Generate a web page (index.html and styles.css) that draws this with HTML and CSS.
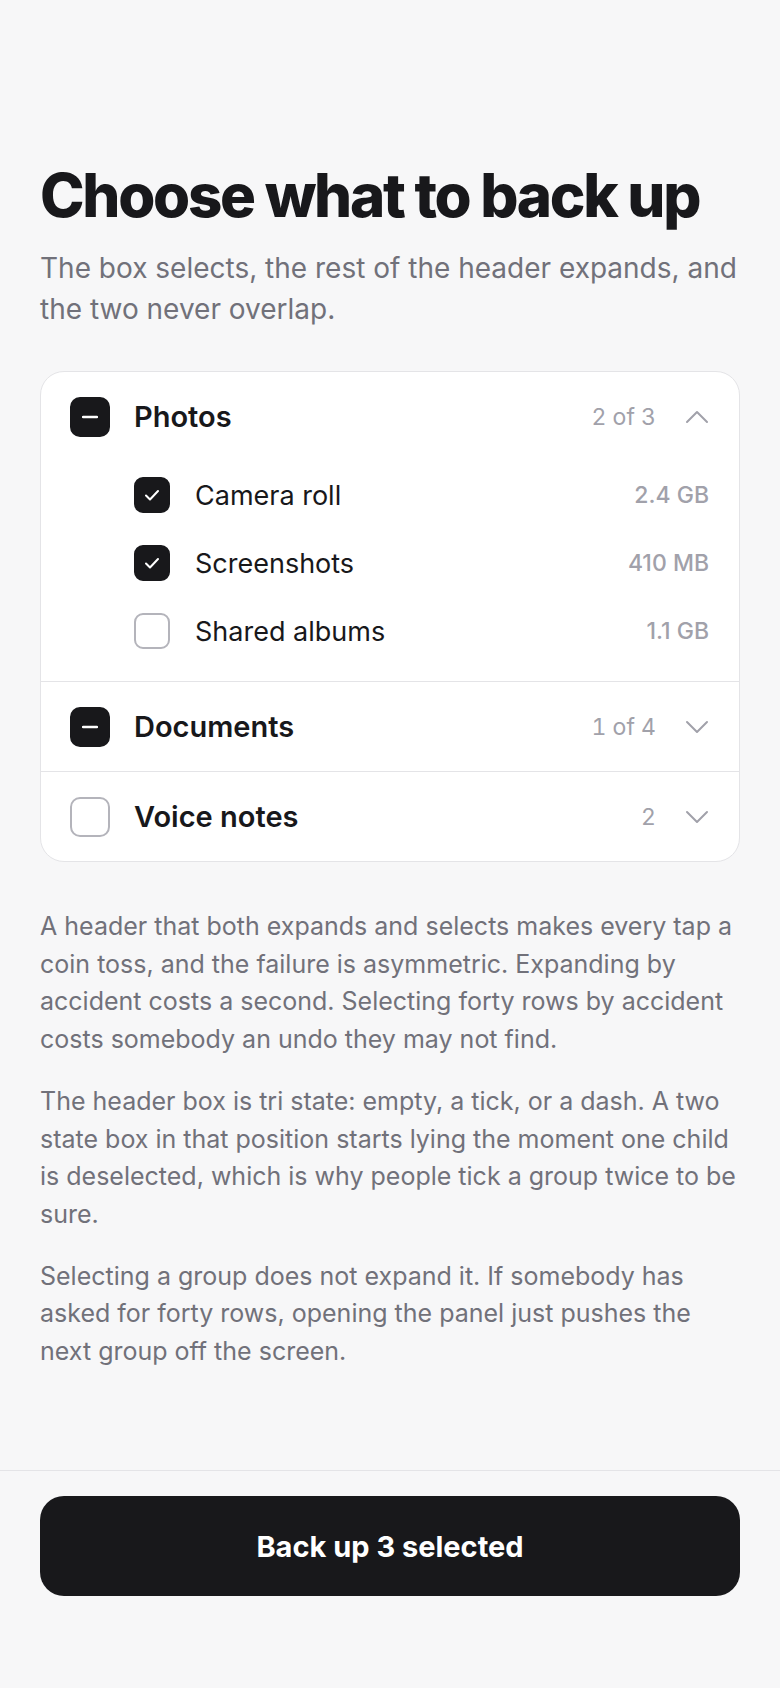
FILE: index.html
```html
<!DOCTYPE html>
<html lang="en">
<head>
<meta charset="UTF-8">
<meta name="viewport" content="width=device-width, initial-scale=1.0">
<title>Choose what to back up</title>
<link rel="stylesheet" href="styles.css">
</head>
<body>

<div class="page">
    <main class="content">
        <h1 class="title">Choose what to back up</h1>
        <p class="lead">The box selects, the rest of the header expands, and the two never overlap.</p>

        <div class="groups">
            <div class="group">
                <div class="group-head">
                    <span class="box box-on">
                        <svg viewBox="0 0 16 16" width="16" height="16"><line x1="1" y1="8" x2="15" y2="8" stroke="#fff" stroke-width="2.5" stroke-linecap="round"/></svg>
                    </span>
                    <span class="group-name">Photos</span>
                    <span class="group-count">2 of 3</span>
                    <svg class="chevron" viewBox="0 0 24 24" width="24" height="24"><polyline points="2,17 12,7 22,17" fill="none" stroke="#a1a1aa" stroke-width="2" stroke-linecap="round" stroke-linejoin="round"/></svg>
                </div>
                <ul class="items">
                    <li class="item">
                        <span class="box box-small box-on">
                            <svg viewBox="0 0 14 12" width="14" height="12"><polyline points="1,6.5 5,10.5 13,2" fill="none" stroke="#fff" stroke-width="2" stroke-linecap="round" stroke-linejoin="round"/></svg>
                        </span>
                        <span class="item-name">Camera roll</span>
                        <span class="item-size">2.4 GB</span>
                    </li>
                    <li class="item">
                        <span class="box box-small box-on">
                            <svg viewBox="0 0 14 12" width="14" height="12"><polyline points="1,6.5 5,10.5 13,2" fill="none" stroke="#fff" stroke-width="2" stroke-linecap="round" stroke-linejoin="round"/></svg>
                        </span>
                        <span class="item-name">Screenshots</span>
                        <span class="item-size">410 MB</span>
                    </li>
                    <li class="item">
                        <span class="box box-small"></span>
                        <span class="item-name">Shared albums</span>
                        <span class="item-size">1.1 GB</span>
                    </li>
                </ul>
            </div>

            <div class="group">
                <div class="group-head">
                    <span class="box box-on">
                        <svg viewBox="0 0 16 16" width="16" height="16"><line x1="1" y1="8" x2="15" y2="8" stroke="#fff" stroke-width="2.5" stroke-linecap="round"/></svg>
                    </span>
                    <span class="group-name">Documents</span>
                    <span class="group-count">1 of 4</span>
                    <svg class="chevron" viewBox="0 0 24 24" width="24" height="24"><polyline points="2,7 12,17 22,7" fill="none" stroke="#a1a1aa" stroke-width="2" stroke-linecap="round" stroke-linejoin="round"/></svg>
                </div>
            </div>

            <div class="group">
                <div class="group-head">
                    <span class="box"></span>
                    <span class="group-name">Voice notes</span>
                    <span class="group-count">2</span>
                    <svg class="chevron" viewBox="0 0 24 24" width="24" height="24"><polyline points="2,7 12,17 22,7" fill="none" stroke="#a1a1aa" stroke-width="2" stroke-linecap="round" stroke-linejoin="round"/></svg>
                </div>
            </div>
        </div>

        <div class="notes">
            <p>A header that both expands and selects makes every tap a coin toss, and the failure is asymmetric. Expanding by accident costs a second. Selecting forty rows by accident costs somebody an undo they may not find.</p>
            <p>The header box is tri state: empty, a tick, or a dash. A two state box in that position starts lying the moment one child is deselected, which is why people tick a group twice to be sure.</p>
            <p>Selecting a group does not expand it. If somebody has asked for forty rows, opening the panel just pushes the next group off the screen.</p>
        </div>
    </main>

    <footer class="action-bar">
        <button type="button" class="primary">Back up 3 selected</button>
    </footer>
</div>

</body>
</html>
```

FILE: styles.css
```css
body {
    font-family: Inter, "Noto Sans", Arial, sans-serif;
    background-color: #f7f7f8;
    color: #18181b;
    margin: 0;
    padding: 0;
}
.page {
    min-height: 100vh;
    display: flex;
    flex-direction: column;
}
.content {
    flex: 1;
    padding: 162px 40px 0;
}
.title {
    font-size: 60px;
    font-weight: 800;
    letter-spacing: -0.038em;
    line-height: 66px;
    margin: 0;
}
.lead {
    font-size: 28px;
    line-height: 41px;
    color: #71717a;
    margin: 20px 0 0;
}
.groups {
    margin-top: 41px;
    background-color: #fff;
    border: 1px solid #e4e4e7;
    border-radius: 24px;
    overflow: hidden;
}
.group + .group {
    border-top: 1px solid #e4e4e7;
}
.group-head {
    height: 89px;
    padding: 0 30px 0 29px;
    display: flex;
    align-items: center;
}
.box {
    width: 40px;
    height: 40px;
    flex: none;
    box-sizing: border-box;
    border: 2px solid #b4b4bb;
    border-radius: 10px;
    display: flex;
    align-items: center;
    justify-content: center;
}
.box-small {
    width: 36px;
    height: 36px;
    border-radius: 9px;
}
.box-on {
    background-color: #18181b;
    border-color: #18181b;
}
.group-name {
    flex: 1;
    margin-left: 24px;
    font-size: 29px;
    font-weight: 600;
}
.group-count {
    font-size: 23px;
    font-variant-numeric: tabular-nums;
    color: #a1a1aa;
    margin-right: 29px;
}
.chevron {
    flex: none;
}
.items {
    list-style: none;
    margin: 0;
    padding: 0 30px 16px 93px;
}
.item {
    height: 68px;
    display: flex;
    align-items: center;
}
.item-name {
    flex: 1;
    margin-left: 25px;
    font-size: 27px;
}
.item-size {
    font-size: 23px;
    font-weight: 500;
    color: #a1a1aa;
}
.notes {
    margin-top: 46px;
}
.notes p {
    font-size: 25px;
    line-height: 37.7px;
    color: #71717a;
    margin: 0 0 24px;
}
.action-bar {
    border-top: 1px solid #e4e4e7;
    padding: 25px 40px 92px;
}
.primary {
    display: block;
    width: 100%;
    height: 100px;
    background-color: #18181b;
    color: #fff;
    border: none;
    border-radius: 24px;
    font-family: inherit;
    font-size: 29px;
    font-weight: 700;
    cursor: pointer;
}
```
